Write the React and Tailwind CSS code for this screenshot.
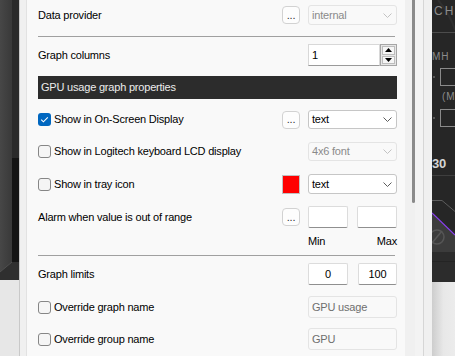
import React from 'react'

function Chevron({ disabled }) {
  return (
    <svg width="9" height="5" viewBox="0 0 9 5">
      <path d="M0.5 0.5 L4.5 4.5 L8.5 0.5" fill="none" stroke={disabled ? '#c2c2c2' : '#5c5c5c'} strokeWidth="1" />
    </svg>
  )
}

function Combo({ value, disabled }) {
  return (
    <div
      className={
        disabled
          ? 'flex h-full w-[89px] items-center justify-between rounded-[3px] border border-[#e4e4e4] bg-[#f9f9f9] pl-[3px] pr-[4px] text-[#8a8a8a]'
          : 'flex h-full w-[89px] items-center justify-between rounded-[3px] border border-[#c6c6c6] bg-white pl-[3px] pr-[4px] text-black'
      }
    >
      <span>{value}</span>
      <Chevron disabled={disabled} />
    </div>
  )
}

function Dots() {
  return (
    <div className="flex h-[18px] w-[18px] items-center justify-center rounded-[4px] border border-[#d2d2d2] bg-[#fdfdfd] text-[11px] leading-none text-[#333]">
      ...
    </div>
  )
}

function Check({ checked }) {
  if (checked) {
    return (
      <span className="flex h-[13px] w-[13px] shrink-0 items-center justify-center rounded-[3px] bg-[#0067c0]">
        <svg width="9" height="7" viewBox="0 0 9 7">
          <path d="M1.2 3.7 L3.4 5.8 L7.8 1.3" fill="none" stroke="#fff" strokeWidth="1.1" />
        </svg>
      </span>
    )
  }
  return <span className="h-[13px] w-[13px] shrink-0 rounded-[3px] border border-[#868686] bg-[#f5f5f5]" />
}

function Field({ value, w = 'w-[40px]', center, disabled }) {
  return (
    <div
      className={
        (disabled
          ? 'flex h-full items-center rounded-[3px] border border-[#e4e4e4] bg-[#f9f9f9] pl-[3px] text-[#6e6e6e] '
          : 'flex h-full items-center rounded-[2px] border border-[#dcdcdc] border-b-[#8f8f8f] bg-white text-black ') +
        w +
        (center ? ' justify-center' : ' pl-[3px]')
      }
    >
      {value}
    </div>
  )
}

function Row({ label, check, checked, h = 'h-[22px]', mt, children }) {
  return (
    <div className={`flex items-center ${h} ${mt}`}>
      <div className="flex flex-1 items-center gap-[3px]">
        {check && <Check checked={checked} />}
        <span>{label}</span>
      </div>
      <div className="flex h-full items-center gap-[8px]">{children}</div>
    </div>
  )
}

function LeftSkin() {
  return (
    <div className="flex w-[19px] flex-col">
      <svg width="19" height="280" viewBox="0 0 19 280" className="block">
        <defs>
          <linearGradient id="lg" x1="0" x2="1" y1="0" y2="0">
            <stop offset="0" stopColor="#474747" />
            <stop offset="1" stopColor="#393939" />
          </linearGradient>
        </defs>
        <rect x="0" y="0" width="12" height="280" fill="url(#lg)" />
        <rect x="12" y="0" width="7" height="158" fill="#2a2a2a" />
        <rect x="12" y="158" width="7" height="104" fill="#141414" />
        <polygon points="0,272 12,262 19,262 19,280 0,280" fill="#2f2f2f" />
        <line x1="0" y1="272" x2="12" y2="262" stroke="#505050" strokeWidth="1" />
      </svg>
      <div className="flex-1 bg-[#e7e7e7]" />
    </div>
  )
}

function RightSkin() {
  return (
    <div className="flex w-[23px] flex-col">
      <svg width="23" height="282" viewBox="0 0 23 282" className="block" style={{ fontFamily: '"Liberation Sans", Arial, sans-serif' }}>
        <rect x="0" y="0" width="23" height="282" fill="#262626" />
        <path d="M6 0 Q18 14 23 30" fill="none" stroke="#2f2f2f" strokeWidth="2" />
        <text x="2" y="15" fontSize="12" letterSpacing="2" fill="#8c8c8c">CH</text>
        <line x1="0" y1="32.5" x2="23" y2="32.5" stroke="#4c4c4c" />
        <text x="0" y="60" fontSize="10" letterSpacing="1" fill="#8c8c8c">MH</text>
        <rect x="8.5" y="68.5" width="20" height="17" fill="none" stroke="#8a8a8a" />
        <rect x="1" y="76" width="2" height="2" fill="#555" />
        <text x="10" y="100" fontSize="10" letterSpacing="1" fill="#8c8c8c">(M</text>
        <rect x="8.5" y="109.5" width="20" height="17" fill="none" stroke="#8a8a8a" />
        <rect x="1" y="117" width="2" height="2" fill="#555" />
        <text x="0" y="168" fontSize="13" fontWeight="bold" fill="#d4d4d4">30</text>
        <line x1="0" y1="175.5" x2="23" y2="175.5" stroke="#3e3e3e" />
        <path d="M0 200.5 L10 200.5 L23 211.5" fill="none" stroke="#5c5c5c" />
        <polygon points="0,213 23,235 23,252 0,252" fill="#3c3c3c" />
        <line x1="0" y1="213" x2="23" y2="235" stroke="#8b3ff2" strokeWidth="1.2" />
        <circle cx="5" cy="237" r="7" fill="none" stroke="#565656" strokeWidth="1.5" />
        <line x1="0" y1="243" x2="10" y2="231" stroke="#565656" strokeWidth="1.5" />
        <rect x="0" y="252" width="23" height="30" fill="#2c2c2c" />
        <line x1="0" y1="261.5" x2="23" y2="261.5" stroke="#242424" />
      </svg>
      <div className="flex-1 bg-linear-to-r from-[#cdcdcd] via-[#e8e8e8] to-[#ececec]" />
    </div>
  )
}

export default function App() {
  return (
    <div className="flex h-[356px] w-[455px] overflow-hidden bg-[#f0f0f0] font-['Liberation_Sans',Arial,sans-serif] text-[11px] tracking-[-0.2px] text-black">
      <LeftSkin />
      <div className="w-[8px] border-l border-r border-l-[#c9c9c9] border-r-[#e2e2e2] bg-[#f0f0f0]" />

      <main className="flex w-[378px] flex-col bg-[#f9f9f9] pl-[11px] pr-[8px]">
        <Row label="Data provider" h="h-[20px]" mt="mt-[5px]">
          <Dots />
          <Combo value="internal" disabled />
        </Row>

        <div className="mr-[2px] mt-[11px] h-px bg-[#a0a0a0]" />

        <Row label="Graph columns" mt="mt-[7px]">
          <div className="flex h-full">
            <div className="flex w-[72px] items-center border border-[#d8d8d8] border-b-[#9a9a9a] bg-white pl-[3px]">1</div>
            <div className="flex w-[17px] flex-col gap-px border border-[#a6a6a6] bg-[#e6e6e6] p-px">
              <div className="flex flex-1 items-center justify-center border border-[#bdbdbd] bg-[#f6f6f6]">
                <svg width="7" height="4" viewBox="0 0 7 4"><path d="M0 4 L3.5 0 L7 4 Z" fill="#000" /></svg>
              </div>
              <div className="flex flex-1 items-center justify-center border border-[#bdbdbd] bg-[#f6f6f6]">
                <svg width="7" height="4" viewBox="0 0 7 4"><path d="M0 0 L7 0 L3.5 4 Z" fill="#000" /></svg>
              </div>
            </div>
          </div>
        </Row>

        <div className="mt-[10px] flex h-[23px] items-center bg-[#2c2c2c] pl-[3px] text-[#ececec]">
          GPU usage graph properties
        </div>

        <Row label="Show in On-Screen Display" check checked h="h-[19px]" mt="mt-[11px]">
          <Dots />
          <Combo value="text" />
        </Row>

        <Row label="Show in Logitech keyboard LCD display" check h="h-[19px]" mt="mt-[13px]">
          <Combo value="4x6 font" disabled />
        </Row>

        <Row label="Show in tray icon" check h="h-[20px]" mt="mt-[13px]">
          <div className="h-[19px] w-[18px] border border-[#c0c0c0] bg-[#ff0000]" />
          <Combo value="text" />
        </Row>

        <Row label="Alarm when value is out of range" mt="mt-[12px]">
          <Dots />
          <div className="flex h-full gap-[9px]">
            <Field value="" />
            <Field value="" />
          </div>
        </Row>

        <div className="mt-[8px] flex h-[11px] items-center justify-end">
          <div className="flex w-[89px] justify-between">
            <span>Min</span>
            <span>Max</span>
          </div>
        </div>

        <div className="mr-[2px] mt-[8px] h-px bg-[#a0a0a0]" />

        <Row label="Graph limits" mt="mt-[7px]">
          <div className="flex h-full gap-[10px]">
            <Field value="0" center />
            <Field value="100" w="w-[39px]" center />
          </div>
        </Row>

        <Row label="Override graph name" check mt="mt-[11px]">
          <Field value="GPU usage" w="w-[89px]" disabled />
        </Row>

        <Row label="Override group name" check mt="mt-[10px]">
          <Field value="GPU" w="w-[89px]" disabled />
        </Row>
      </main>

      <div className="flex w-[27px]">
        <div className="w-[7px]" />
        <div className="flex w-[3px] flex-col">
          <div className="h-[203px] rounded-b-full bg-[#8a8a8a]" />
        </div>
        <div className="w-[9px] border-r border-[#d6d6d6] bg-[#f3f3f3]" />
        <div className="w-[8px]" />
      </div>

      <RightSkin />
    </div>
  )
}
